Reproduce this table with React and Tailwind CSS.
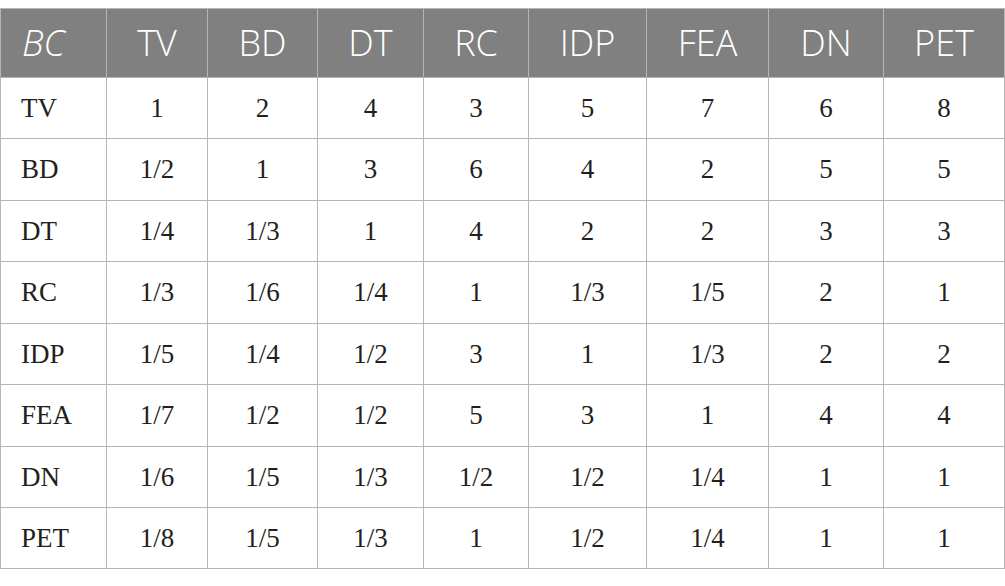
import React from "react";

const headers = ["BC", "TV", "BD", "DT", "RC", "IDP", "FEA", "DN", "PET"];
const widths = [106, 101, 110, 106, 105, 118, 122, 115, 121];
const rows = [
  ["TV", "1", "2", "4", "3", "5", "7", "6", "8"],
  ["BD", "1/2", "1", "3", "6", "4", "2", "5", "5"],
  ["DT", "1/4", "1/3", "1", "4", "2", "2", "3", "3"],
  ["RC", "1/3", "1/6", "1/4", "1", "1/3", "1/5", "2", "1"],
  ["IDP", "1/5", "1/4", "1/2", "3", "1", "1/3", "2", "2"],
  ["FEA", "1/7", "1/2", "1/2", "5", "3", "1", "4", "4"],
  ["DN", "1/6", "1/5", "1/3", "1/2", "1/2", "1/4", "1", "1"],
  ["PET", "1/8", "1/5", "1/3", "1", "1/2", "1/4", "1", "1"],
];
const rowH = ["h-[61px]", "h-[62px]", "h-[61px]", "h-[62px]", "h-[61px]", "h-[62px]", "h-[61px]", "h-[61px]"];

export default function App() {
  return (
    <div className="w-[1005px] h-[586px] bg-white pt-[8px]">
      <table className="border-collapse table-fixed w-[1004px] border border-[#b5b5b5]">
        <colgroup>
          {widths.map((w, i) => (
            <col key={i} style={{ width: w }} />
          ))}
        </colgroup>
        <thead>
          <tr className="h-[69px] bg-[#7f807f]">
            {headers.map((h, i) => (
              <th
                key={h}
                className={`border border-[#b5b5b5] p-0 font-light text-white text-[36px] font-['Open_Sans',sans-serif] ${
                  i === 0 ? "text-left pl-[21px] italic" : "text-center"
                }`}
              >
                {h}
              </th>
            ))}
          </tr>
        </thead>
        <tbody>
          {rows.map((r, ri) => (
            <tr key={ri} className={rowH[ri]}>
              {r.map((c, ci) => (
                <td
                  key={ci}
                  className={`border border-[#b5b5b5] p-0 text-[#231f20] text-[27px] font-['Liberation_Serif',serif] ${
                    ci === 0 ? "text-left pl-[20px]" : "text-center"
                  }`}
                >
                  {c}
                </td>
              ))}
            </tr>
          ))}
        </tbody>
      </table>
    </div>
  );
}
